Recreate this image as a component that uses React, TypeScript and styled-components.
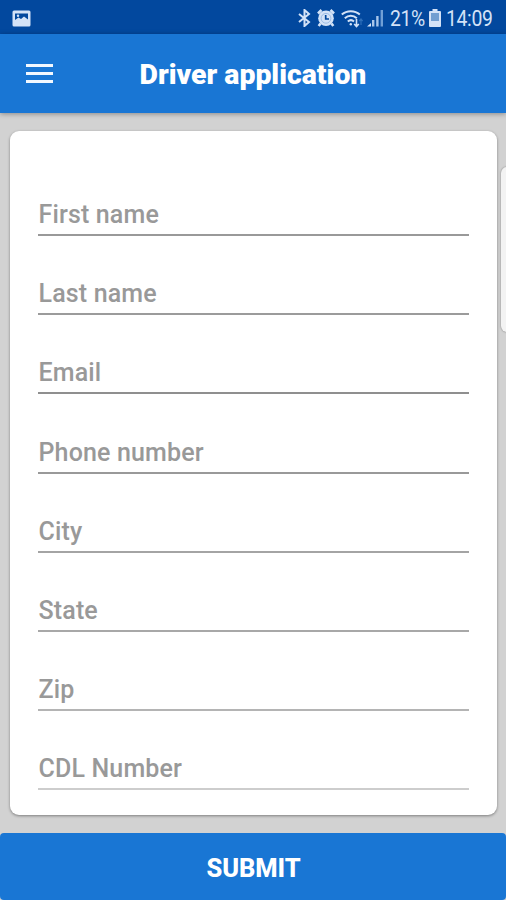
import React from "react";
import styled, { createGlobalStyle } from "styled-components";

const GlobalStyle = createGlobalStyle`
  * { box-sizing: border-box; }
  body { margin: 0; background: #d2d2d2; font-family: Roboto, sans-serif; overflow: hidden; }
`;

const Screen = styled.div`
  position: relative;
  display: flex;
  flex-direction: column;
  width: 506px;
  height: 900px;
  overflow: hidden;
  background: #d2d2d2;
`;

const StatusBar = styled.div`
  display: flex;
  align-items: center;
  justify-content: space-between;
  flex: none;
  height: 34px;
  padding: 2px 13px 0 12px;
  background: #02489e;
  color: #d3e2f7;
`;

const StatusGroup = styled.div`
  display: flex;
  align-items: center;
`;

const StatusIcon = styled.svg<{ $gap?: number }>`
  display: block;
  flex: none;
  margin-right: ${(p) => p.$gap ?? 0}px;
`;

const StatusText = styled.span<{ $width: number; $gap?: number }>`
  width: ${(p) => p.$width}px;
  margin-right: ${(p) => p.$gap ?? 0}px;
  padding-top: 2px;
  font-size: 22px;
  line-height: 30px;
  letter-spacing: -0.4px;
  white-space: nowrap;
  transform: scaleX(0.88);
  transform-origin: left center;
`;

const AppBar = styled.header`
  display: grid;
  grid-template-columns: 80px 1fr 80px;
  align-items: center;
  flex: none;
  height: 79px;
  background: #1976d4;
  box-shadow: 0 1px 5px rgba(0, 0, 0, 0.35);
  z-index: 1;
`;

const MenuButton = styled.button`
  display: flex;
  flex-direction: column;
  gap: 5px;
  width: 27px;
  margin-left: 26px;
  padding: 0;
  border: 0;
  background: none;
`;

const MenuLine = styled.span`
  height: 3px;
  background: #f2f8ff;
`;

const Title = styled.h1`
  margin: 3px 0 0;
  color: #fff;
  font-size: 28.4px;
  font-weight: 900;
  line-height: 32px;
  letter-spacing: 0px;
  text-align: center;
  white-space: nowrap;
`;

const Content = styled.main`
  flex: none;
  height: 720px;
  padding: 18px 9px 18px 10px;
`;

const Card = styled.form`
  height: 684px;
  padding: 26px 28px 0;
  border-radius: 9px;
  background: #fff;
  box-shadow: 0 1px 3px rgba(0, 0, 0, 0.4);
`;

const Field = styled.label<{ $line: string }>`
  display: flex;
  align-items: flex-end;
  height: 79.15px;
  padding: 0 0 3px 0.5px;
  border-bottom: 2px solid ${(p) => p.$line};
  color: #999;
  font-size: 25px;
  font-weight: 500;
  line-height: 32px;
  letter-spacing: 0.15px;
`;

const ScrollThumb = styled.div`
  position: absolute;
  top: 167px;
  left: 501px;
  width: 12px;
  height: 165px;
  border-radius: 6px;
  background: #f3f3f3;
  box-shadow: 0 0 2px rgba(0, 0, 0, 0.45);
`;

const SubmitButton = styled.button`
  flex: none;
  width: 100%;
  height: 67px;
  padding: 3px 0 0 1px;
  border: 0;
  border-radius: 4px;
  background: #1976d4;
  color: #fff;
  font-family: inherit;
  font-size: 25.5px;
  font-weight: 800;
  letter-spacing: -0.1px;
`;

const FIELDS = [
  { label: "First name", line: "#999" },
  { label: "Last name", line: "#9b9b9b" },
  { label: "Email", line: "#8f8f8f" },
  { label: "Phone number", line: "#999" },
  { label: "City", line: "#a4a4a4" },
  { label: "State", line: "#a8a8a8" },
  { label: "Zip", line: "#b4b4b4" },
  { label: "CDL Number", line: "#cdcdcd" },
];

const PictureIcon = () => (
  <StatusIcon width="19" height="17" viewBox="0 0 19 17">
    <rect x="0.5" y="0.5" width="18" height="16" rx="1.5" fill="#d3e2f7" />
    <path d="M3 3.5h13v6l-4-3-3 2.5-2.5-1.5L3 10z" fill="#02489e" />
    <circle cx="6" cy="5.7" r="1.2" fill="#d3e2f7" />
  </StatusIcon>
);

const BluetoothIcon = () => (
  <StatusIcon $gap={6} width="13" height="18" viewBox="0 0 13 18" fill="none" stroke="currentColor" strokeWidth="2">
    <path d="M1 5l10 8-4.5 4V1L11 5 1 13" />
  </StatusIcon>
);

const AlarmIcon = () => (
  <StatusIcon $gap={6} width="18" height="18" viewBox="0 0 18 18">
    <path d="M1 4.5L4.5 1M17 4.5L13.5 1M3.5 14.5L1.7 17M14.5 14.5l1.8 2.5" stroke="currentColor" strokeWidth="2.6" />
    <circle cx="9" cy="9.3" r="7.8" fill="currentColor" />
    <circle cx="9" cy="9.3" r="4.9" fill="#d3e2f7" stroke="#8fb2df" strokeWidth="0.8" />
    <path d="M8.7 6v4h3.3" fill="none" stroke="#02489e" strokeWidth="1.7" />
  </StatusIcon>
);

const WifiIcon = () => (
  <StatusIcon $gap={4} width="22" height="19" viewBox="0 0 22 19" fill="none" stroke="currentColor" strokeWidth="2">
    <path d="M.8 5.5c5-4.5 13-4.5 18 0M3.8 9.2c3.5-3.2 8.5-3.2 12 0M6.8 12.5c2-1.7 4.4-1.7 6.2 0" />
    <circle cx="9.8" cy="15.3" r="1.2" fill="currentColor" stroke="none" />
    <path d="M15.5 10v7M13.2 15l2.3 2.5 2.3-2.5" strokeWidth="1.6" />
    <path d="M20 16v-6M18.3 12l1.7-2 1.7 2" stroke="#2f70bb" strokeWidth="1.2" />
  </StatusIcon>
);

const SignalIcon = () => (
  <StatusIcon $gap={6} width="17" height="18" viewBox="0 0 17 18">
    <path d="M0 17.5L4 14v3.5z" fill="currentColor" />
    <path d="M5 11h2.4v6.5H5zM9.2 7h2.4v10.5H9.2z" fill="#a7c5ea" />
    <path d="M13.6 1H16v16.5h-2.4z" fill="#709fd6" />
  </StatusIcon>
);

const BatteryIcon = () => (
  <StatusIcon $gap={5} width="12" height="18" viewBox="0 0 12 18">
    <path d="M3.5 0h5v2H11q1 0 1 1v14q0 1-1 1H1q-1 0-1-1V3q0-1 1-1h2.5z" fill="currentColor" />
    <path d="M2 4h8v8H2z" fill="#719ed1" />
  </StatusIcon>
);

export default function App() {
  return (
    <Screen>
      <GlobalStyle />
      <StatusBar>
        <PictureIcon />
        <StatusGroup>
          <BluetoothIcon />
          <AlarmIcon />
          <WifiIcon />
          <SignalIcon />
          <StatusText $width={34} $gap={5}>21%</StatusText>
          <BatteryIcon />
          <StatusText $width={47}>14:09</StatusText>
        </StatusGroup>
      </StatusBar>
      <AppBar>
        <MenuButton aria-label="Menu">
          <MenuLine />
          <MenuLine />
          <MenuLine />
        </MenuButton>
        <Title>Driver application</Title>
      </AppBar>
      <Content>
        <Card>
          {FIELDS.map((f) => (
            <Field key={f.label} $line={f.line}>
              {f.label}
            </Field>
          ))}
        </Card>
      </Content>
      <SubmitButton type="button">SUBMIT</SubmitButton>
      <ScrollThumb />
    </Screen>
  );
}
